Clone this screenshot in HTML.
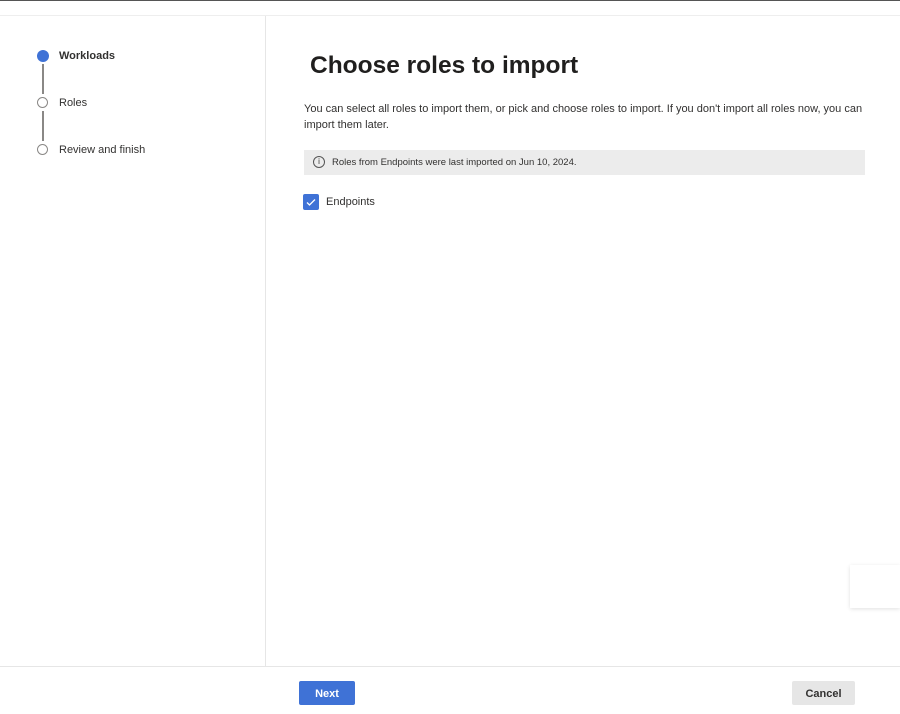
<!DOCTYPE html>
<html><head><meta charset="utf-8"><style>
body{margin:0;width:900px;height:714px;position:relative;background:#fff;font-family:"Liberation Sans",sans-serif;color:#323130;overflow:hidden}
.a{position:absolute}
</style></head><body>
<div class="a" style="left:0;top:0;width:900px;height:1px;background:#555"></div>
<div class="a" style="left:0;top:15px;width:900px;height:1px;background:#eee"></div>
<div class="a" style="left:265px;top:16px;width:1px;height:650px;background:#e6e6e6"></div>
<div class="a" style="left:0;top:666px;width:900px;height:1px;background:#e6e6e6"></div>

<div class="a" style="left:37px;top:50px;width:12px;height:12px;border-radius:50%;background:#3f72d6"></div>
<div class="a" style="left:42px;top:64px;width:2px;height:30px;background:#8a8886"></div>
<div class="a" style="left:37px;top:97px;width:9px;height:9px;border-radius:50%;border:1.5px solid #8a8886"></div>
<div class="a" style="left:42px;top:111px;width:2px;height:30px;background:#8a8886"></div>
<div class="a" style="left:37px;top:144px;width:9px;height:9px;border-radius:50%;border:1.5px solid #8a8886"></div>
<div class="a" style="left:59px;top:50px;font-size:11px;font-weight:bold">Workloads</div>
<div class="a" style="left:59px;top:97px;font-size:11px">Roles</div>
<div class="a" style="left:59px;top:144px;font-size:11px">Review and finish</div>

<div class="a" style="left:310px;top:52px;font-size:24.5px;font-weight:bold;color:#201f1e">Choose roles to import</div>
<div class="a" style="left:304px;top:102px;width:565px;font-size:11px;line-height:15.5px">You can select all roles to import them, or pick and choose roles to import. If you don't import all roles now, you can import them later.</div>
<div class="a" style="left:304px;top:150px;width:561px;height:25px;background:#ececec"></div>
<div class="a" style="left:313px;top:156px;width:10px;height:10px;border:1px solid #555;border-radius:50%;font-size:8px;line-height:10px;text-align:center">i</div>
<div class="a" style="left:332px;top:157px;font-size:9.5px">Roles from Endpoints were last imported on Jun 10, 2024.</div>
<div class="a" style="left:303px;top:194px;width:16px;height:16px;background:#3f72d6;border-radius:2px"><svg width="16" height="16"><path d="M4 8.5l2.5 2.5L12 5.5" stroke="#fff" stroke-width="1.3" fill="none"/></svg></div>
<div class="a" style="left:326px;top:196px;font-size:11px">Endpoints</div>

<div class="a" style="left:850px;top:565px;width:50px;height:43px;background:#fff;box-shadow:0 1px 4px rgba(0,0,0,.12)"></div>

<div class="a" style="left:299px;top:681px;width:56px;height:24px;background:#3f72d6;border-radius:2px;color:#fff;font-size:11px;font-weight:bold;text-align:center;line-height:26px">Next</div>
<div class="a" style="left:792px;top:681px;width:63px;height:24px;background:#e6e6e6;border-radius:2px;font-size:11px;font-weight:bold;text-align:center;line-height:26px">Cancel</div>
</body></html>
